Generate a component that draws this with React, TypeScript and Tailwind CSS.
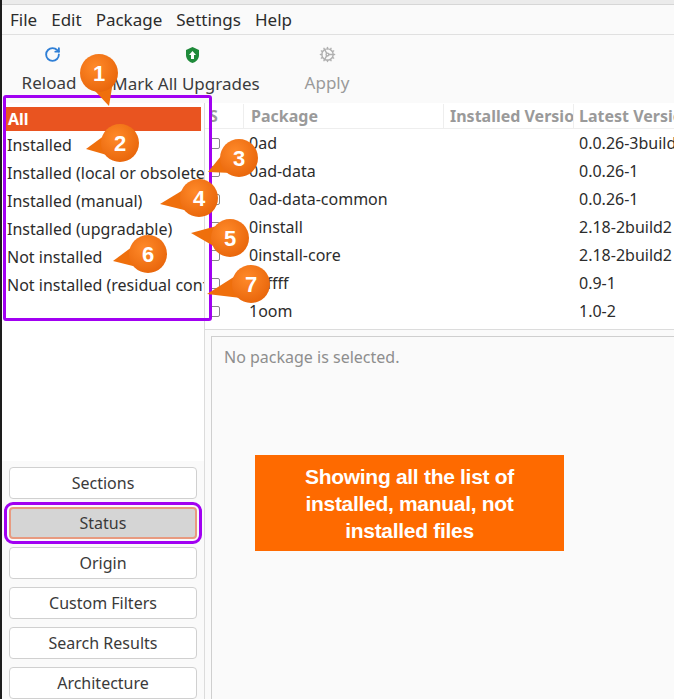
import { RotateCw, Cog } from "lucide-react"

const filters = [
  "Installed",
  "Installed (local or obsolete)",
  "Installed (manual)",
  "Installed (upgradable)",
  "Not installed",
  "Not installed (residual config)",
]

const packages = [
  ["0ad", "0.0.26-3build"],
  ["0ad-data", "0.0.26-1"],
  ["0ad-data-common", "0.0.26-1"],
  ["0install", "2.18-2build2"],
  ["0install-core", "2.18-2build2"],
  ["0xffff", "0.9-1"],
  ["1oom", "1.0-2"],
]

const callouts = [
  { n: 1, x: 97, y: 73, tx: 107, ty: 106 },
  { n: 2, x: 118, y: 143, tx: 84, ty: 149 },
  { n: 3, x: 237, y: 158, tx: 206, ty: 172 },
  { n: 4, x: 197, y: 198, tx: 158, ty: 204 },
  { n: 5, x: 228, y: 238, tx: 189, ty: 233 },
  { n: 6, x: 146, y: 254, tx: 111, ty: 261 },
  { n: 7, x: 249, y: 284, tx: 205, ty: 294 },
]

function Callout({ n, x, y, tx, ty }: { n: number; x: number; y: number; tx: number; ty: number }) {
  const r = 19
  const a = Math.atan2(ty - y, tx - x)
  const p1 = [x + r * 0.8 * Math.cos(a + 1.1), y + r * 0.8 * Math.sin(a + 1.1)]
  const p2 = [x + r * 0.8 * Math.cos(a - 1.1), y + r * 0.8 * Math.sin(a - 1.1)]
  return (
    <g>
      <polygon points={`${p1[0]},${p1[1]} ${tx},${ty} ${p2[0]},${p2[1]}`} fill="#ef6f0c" />
      <circle cx={x} cy={y} r={r} fill="url(#og)" />
      <text x={x} y={y + 8} textAnchor="middle" fill="#fff" fontSize="22" fontWeight="700" fontFamily="Liberation Sans, Arial, sans-serif">
        {n}
      </text>
    </g>
  )
}

export default function App() {
  return (
    <div className="relative w-[674px] h-[699px] overflow-hidden bg-[#fafafa] text-[#2c2c2c] border-l-2 border-[#1d1d1d]" style={{ fontFamily: "'Noto Sans', sans-serif" }}>
      <div className="h-[5px] bg-[#ebebeb] border-b border-[#d6d6d6]" />
      {/* menu */}
      <div className="h-[30px] flex items-center gap-[14px] px-[8px] text-[17px] border-b border-[#e0e0e0] bg-[#fafafa]">
        <span>File</span><span>Edit</span><span>Package</span><span>Settings</span><span>Help</span>
      </div>
      {/* toolbar */}
      <div className="h-[68px] flex items-start pt-[11px] text-[17px] text-[#3c3c3c]">
        <div className="w-[100px] flex flex-col items-center gap-[7px]">
          <RotateCw size={17} className="text-[#2f7fd6]" strokeWidth={2.6} />
          <span className="-ml-[6px]">Reload</span>
        </div>
        <div className="w-[180px] flex flex-col items-center gap-[7px]">
          <svg width="17" height="18" viewBox="0 0 17 18">
            <path d="M8.5 1 L15 4 V9 C15 13 12 16 8.5 17 C5 16 2 13 2 9 V4 Z" fill="#1f8a3a" />
            <path d="M8.5 5 L12 9 H10 V13 H7 V9 H5 Z" fill="#fff" />
          </svg>
          <span className="-ml-[12px]">Mark All Upgrades</span>
        </div>
        <div className="w-[90px] flex flex-col items-center gap-[7px] text-[#9a9a9a]">
          <Cog size={17} className="text-[#b0b0b0]" />
          <span>Apply</span>
        </div>
      </div>
      {/* main */}
      <div className="flex">
        <div className="w-[203px] h-[600px] flex flex-col bg-white border-r border-[#dcdcdc]">
          <div className="h-[358px] pt-[4px] pl-[4px] text-[16px]">
            <div className="h-[24px] bg-[#e95420] text-white font-bold flex items-center pl-[2px] mr-[3px]">All</div>
            {filters.map((f) => (
              <div key={f} className="h-[28px] flex items-center pl-[1px] whitespace-nowrap overflow-hidden">{f}</div>
            ))}
          </div>
          <div className="flex-1 bg-[#fafafa] px-[7px] pt-[6px] flex flex-col gap-[8px] text-[16px] text-[#3a3a3a]">
            {["Sections", "Status", "Origin", "Custom Filters", "Search Results", "Architecture"].map((b) => (
              <div key={b} className={b === "Status" ? "h-[32px] rounded-[4px] border-2 border-[#e89a80] bg-[#d5d5d5] flex items-center justify-center outline-3 outline-[#a100f2] outline-offset-[2px]" : "h-[32px] rounded-[4px] border border-[#d0d0d0] bg-white flex items-center justify-center"}>{b}</div>
            ))}
          </div>
        </div>
        <div className="flex-1 flex flex-col">
          <div className="h-[227px] bg-white border-b border-[#dcdcdc] text-[16px]">
            <div className="h-[26px] flex items-center text-[#9a9a9a] font-bold border-b border-[#eee] whitespace-nowrap overflow-hidden">
              <div className="w-[38px] pl-[4px]">S</div>
              <div className="w-[200px] pl-[7px] border-l border-[#eee]">Package</div>
              <div className="w-[130px] pl-[6px] border-l border-[#eee] overflow-hidden">Installed Version</div>
              <div className="pl-[5px] border-l border-[#eee]">Latest Version</div>
            </div>
            {packages.map(([p, v]) => (
              <div key={p} className="h-[28px] flex items-center whitespace-nowrap overflow-hidden">
                <div className="w-[38px] pl-[4px]"><div className="w-[11px] h-[11px] border border-[#888] rounded-[2px] bg-white" /></div>
                <div className="w-[330px] pl-[6px]">{p}</div>
                <div className="pl-[6px]">{v}</div>
              </div>
            ))}
          </div>
          <div className="flex-1 pt-[6px] pl-[6px]">
            <div className="h-[370px] border border-[#cfcfcf] bg-[#fafafa] pl-[12px] pt-[8px] text-[16px] text-[#8e8e8e]">
              No package is selected.
              <div className="mt-[86px] ml-[31px] w-[309px] h-[96px] bg-[#fe6a00] text-white font-bold text-[21px] leading-[27px] text-center flex items-center justify-center px-[24px] tracking-[-0.3px]" style={{ fontFamily: "'Liberation Sans', Arial, sans-serif" }}>
                Showing all the list of installed, manual, not installed files
              </div>
            </div>
          </div>
        </div>
      </div>
      {/* annotation overlays */}
      <div className="absolute left-[1px] top-[95px] w-[209px] h-[226px] border-[3px] border-[#a100f2] rounded-[3px] pointer-events-none" />
      <svg className="absolute left-0 top-0 pointer-events-none" width="674" height="699">
        <defs>
          <radialGradient id="og" cx="40%" cy="35%" r="70%">
            <stop offset="0%" stopColor="#ff8a2a" />
            <stop offset="100%" stopColor="#e8650a" />
          </radialGradient>
        </defs>
        {callouts.map((c) => (
          <Callout key={c.n} {...c} />
        ))}
      </svg>
    </div>
  )
}
